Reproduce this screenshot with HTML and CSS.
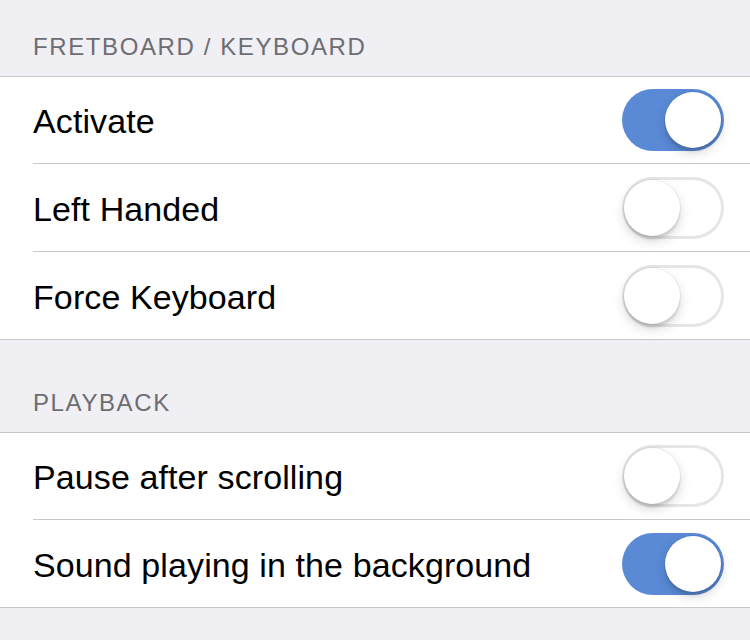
FILE: index.html
```html
<!DOCTYPE html>
<html lang="en">
<head>
    <meta charset="UTF-8">
    <meta name="viewport" content="width=device-width, initial-scale=1.0">
    <title>Settings</title>
    <link rel="stylesheet" href="styles.css">
</head>
<body>
    <div class="section">
        <div class="section-header">FRETBOARD / KEYBOARD</div>
        <div class="group">
            <div class="row">
                <span class="label">Activate</span>
                <div class="switch on"><div class="knob"></div></div>
            </div>
            <div class="row">
                <span class="label">Left Handed</span>
                <div class="switch"><div class="knob"></div></div>
            </div>
            <div class="row">
                <span class="label">Force Keyboard</span>
                <div class="switch"><div class="knob"></div></div>
            </div>
        </div>
    </div>

    <div class="section second">
        <div class="section-header">PLAYBACK</div>
        <div class="group">
            <div class="row">
                <span class="label">Pause after scrolling</span>
                <div class="switch"><div class="knob"></div></div>
            </div>
            <div class="row">
                <span class="label">Sound playing in the background</span>
                <div class="switch on"><div class="knob"></div></div>
            </div>
        </div>
    </div>
</body>
</html>
```

FILE: styles.css
```css
body {
    margin: 0;
    background-color: #efeff4;
    font-family: "Liberation Sans", Arial, sans-serif;
    color: #000;
}

.second {
    margin-top: 16px;
}

.section-header {
    height: 76px;
    box-sizing: border-box;
    display: flex;
    align-items: flex-end;
    padding: 0 33px 17px;
    font-size: 24px;
    line-height: 24px;
    letter-spacing: 1.6px;
    color: #6d6d72;
}

.group {
    background-color: #fff;
    border-top: 1px solid #c8c7cc;
    border-bottom: 1px solid #c8c7cc;
    padding-left: 33px;
}

.row {
    height: 87px;
    display: flex;
    align-items: center;
    justify-content: space-between;
    padding-right: 26px;
    border-bottom: 1px solid #c8c7cc;
}

.row:first-child {
    height: 86px;
}

.row:last-child {
    height: 87px;
    border-bottom: none;
}

.label {
    font-size: 34px;
    letter-spacing: 0.1px;
    padding-top: 3px;
}

.switch {
    position: relative;
    width: 102px;
    height: 62px;
    border-radius: 31px;
    background-color: #fff;
    box-shadow: inset 0 0 0 3px #e6e6e9;
}

.switch.on {
    background-color: #5a8ad6;
    box-shadow: none;
}

.knob {
    position: absolute;
    top: 3px;
    left: 2px;
    width: 56px;
    height: 56px;
    border-radius: 50%;
    background-color: #fff;
    box-shadow: 0 0 0 1px rgba(0, 0, 0, 0.05), 0 4px 2px rgba(0, 0, 0, 0.08), 0 5px 12px rgba(0, 0, 0, 0.16);
}

.switch.on .knob {
    left: auto;
    right: 3px;
}
```
